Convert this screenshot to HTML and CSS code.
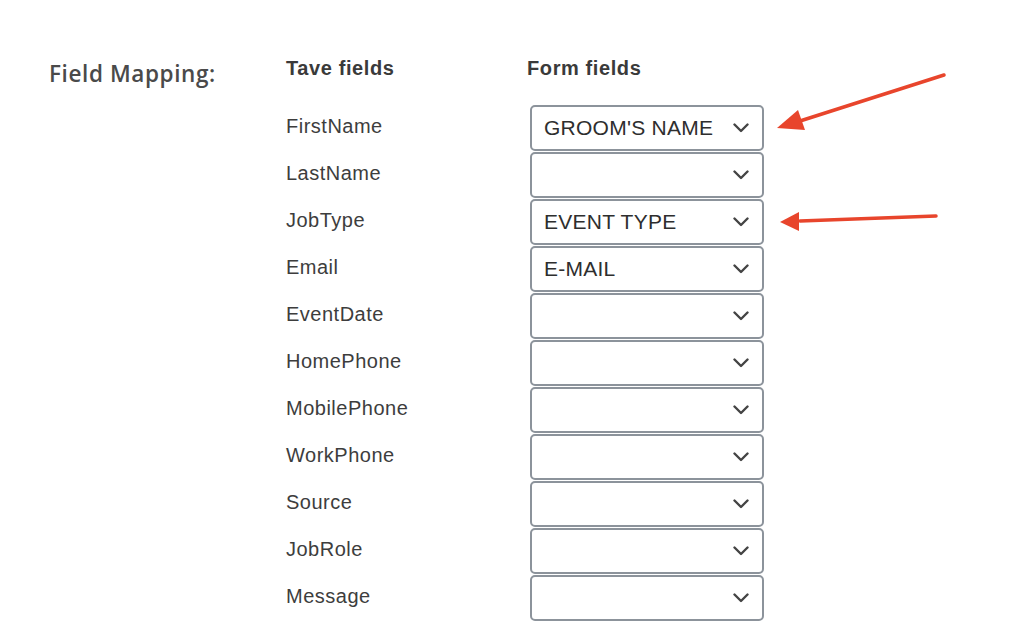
FILE: index.html
```html
<!DOCTYPE html>
<html>
<head>
<meta charset="utf-8">
<link rel="stylesheet" href="styles.css">
</head>
<body>
<div class="page">
  <div class="section">
    <h2 class="section-title">Field Mapping:</h2>
    <div class="mapping">
      <div class="head">Tave fields</div>
      <div class="head head-form">Form fields</div>

      <div class="label">FirstName</div>
      <div class="select"><span class="value">GROOM'S NAME</span><svg class="chev" viewBox="0 0 16 10"><path d="M1.5 1.5 L8 8 L14.5 1.5"/></svg></div>

      <div class="label">LastName</div>
      <div class="select"><span class="value"></span><svg class="chev" viewBox="0 0 16 10"><path d="M1.5 1.5 L8 8 L14.5 1.5"/></svg></div>

      <div class="label">JobType</div>
      <div class="select"><span class="value">EVENT TYPE</span><svg class="chev" viewBox="0 0 16 10"><path d="M1.5 1.5 L8 8 L14.5 1.5"/></svg></div>

      <div class="label">Email</div>
      <div class="select"><span class="value">E-MAIL</span><svg class="chev" viewBox="0 0 16 10"><path d="M1.5 1.5 L8 8 L14.5 1.5"/></svg></div>

      <div class="label">EventDate</div>
      <div class="select"><span class="value"></span><svg class="chev" viewBox="0 0 16 10"><path d="M1.5 1.5 L8 8 L14.5 1.5"/></svg></div>

      <div class="label">HomePhone</div>
      <div class="select"><span class="value"></span><svg class="chev" viewBox="0 0 16 10"><path d="M1.5 1.5 L8 8 L14.5 1.5"/></svg></div>

      <div class="label">MobilePhone</div>
      <div class="select"><span class="value"></span><svg class="chev" viewBox="0 0 16 10"><path d="M1.5 1.5 L8 8 L14.5 1.5"/></svg></div>

      <div class="label">WorkPhone</div>
      <div class="select"><span class="value"></span><svg class="chev" viewBox="0 0 16 10"><path d="M1.5 1.5 L8 8 L14.5 1.5"/></svg></div>

      <div class="label">Source</div>
      <div class="select"><span class="value"></span><svg class="chev" viewBox="0 0 16 10"><path d="M1.5 1.5 L8 8 L14.5 1.5"/></svg></div>

      <div class="label">JobRole</div>
      <div class="select"><span class="value"></span><svg class="chev" viewBox="0 0 16 10"><path d="M1.5 1.5 L8 8 L14.5 1.5"/></svg></div>

      <div class="label">Message</div>
      <div class="select"><span class="value"></span><svg class="chev" viewBox="0 0 16 10"><path d="M1.5 1.5 L8 8 L14.5 1.5"/></svg></div>
    </div>
  </div>

  <svg class="arrows" viewBox="0 0 1024 635" width="1024" height="635">
    <line x1="944" y1="75" x2="800" y2="121" class="shaft"/>
    <polygon points="777,128 798,110 805,130" class="head-tri"/>
    <line x1="936" y1="216" x2="800" y2="221" class="shaft"/>
    <polygon points="780,222 799,212 799,231" class="head-tri"/>
  </svg>
</div>
</body>
</html>
```

FILE: styles.css
```css
html, body {
  margin: 0;
  padding: 0;
  background: #ffffff;
}

.page {
  position: relative;
  width: 1024px;
  height: 635px;
  overflow: hidden;
}

.section {
  display: flex;
  padding: 57px 0 0 49px;
}

.section-title {
  margin: 0;
  width: 237px;
  font-family: "Open Sans", sans-serif;
  font-weight: 600;
  font-size: 22.5px;
  line-height: 34px;
  color: #4a4a4a;
  letter-spacing: 0.6px;
}

.mapping {
  display: grid;
  grid-template-columns: 241px 237px;
  grid-auto-rows: 47px;
  grid-template-rows: 48px;
  font-family: "Liberation Sans", Arial, sans-serif;
}

.head {
  font-weight: bold;
  font-size: 20px;
  color: #3a3a3a;
  line-height: 22px;
  letter-spacing: 0.6px;
}

.label {
  font-size: 20px;
  color: #3d3d3d;
  line-height: 43px;
  letter-spacing: 0.5px;
}

.select {
  margin-left: 3px;
  height: 46px;
  box-sizing: border-box;
  border: 2px solid #8c939b;
  border-radius: 5px;
  display: flex;
  align-items: center;
  justify-content: space-between;
  padding: 0 13px 0 12px;
}

.value {
  font-size: 21px;
  color: #2e2e2e;
  letter-spacing: 0.25px;
}

.chev {
  width: 16px;
  height: 10px;
  fill: none;
  stroke: #444;
  stroke-width: 2.4;
  stroke-linecap: round;
  stroke-linejoin: round;
}

.arrows {
  position: absolute;
  left: 0;
  top: 0;
  pointer-events: none;
}

.shaft {
  stroke: #e8452c;
  stroke-width: 3.5;
  stroke-linecap: round;
}

.head-tri {
  fill: #e8452c;
}
```
